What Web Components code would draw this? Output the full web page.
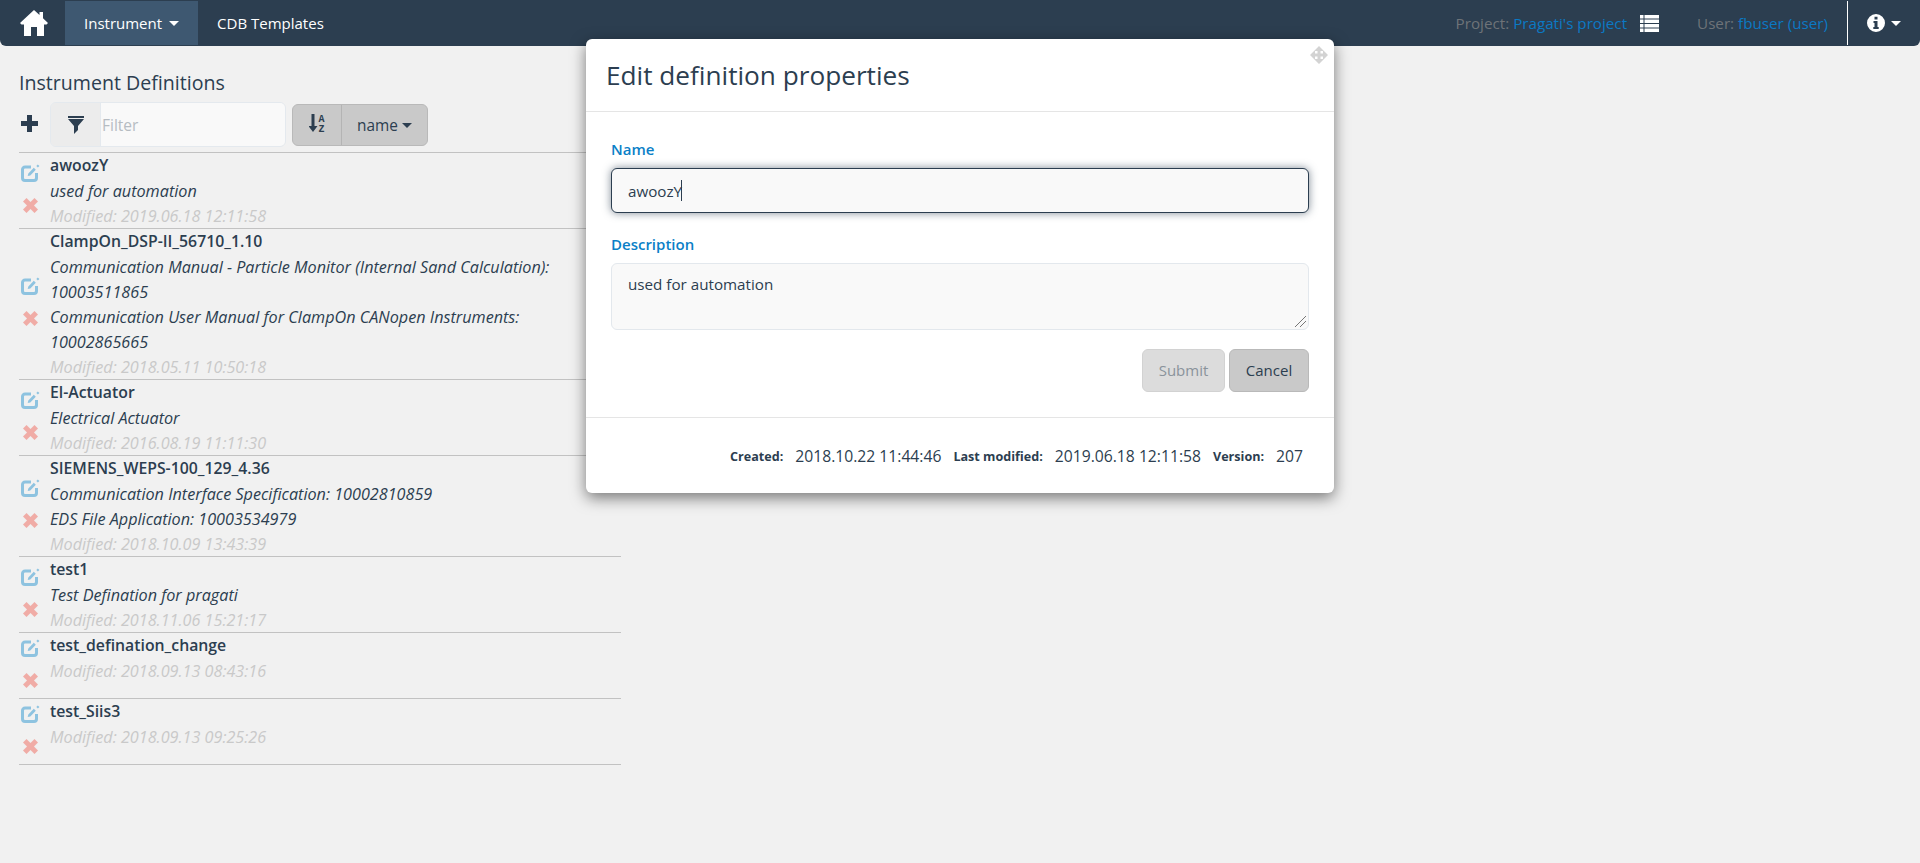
<!DOCTYPE html>
<html>
<head>
<meta charset="utf-8">
<title>Instrument Definitions</title>
<style>
    html, body{
        margin: 0;
        height: 100%;
        background: #f1f1f1;
        font-family: "Open Sans", "Liberation Sans", sans-serif;
        font-size: 15px;
        color: #2c3e50;
    }
</style>
</head>
<body>
<app-shell>
    <app-navbar slot="nav"></app-navbar>
    <definition-list slot="list" title-text="Instrument Definitions">
        <definition-row name="awoozY" modified="2019.06.18 12:11:58">
            <div>used for automation</div>
        </definition-row>
        <definition-row name="ClampOn_DSP-II_56710_1.10" modified="2018.05.11 10:50:18">
            <div>Communication Manual - Particle Monitor (Internal Sand Calculation): 10003511865</div>
            <div>Communication User Manual for ClampOn CANopen Instruments: 10002865665</div>
        </definition-row>
        <definition-row name="El-Actuator" modified="2016.08.19 11:11:30">
            <div>Electrical Actuator</div>
        </definition-row>
        <definition-row name="SIEMENS_WEPS-100_129_4.36" modified="2018.10.09 13:43:39">
            <div>Communication Interface Specification: 10002810859</div>
            <div>EDS File Application: 10003534979</div>
        </definition-row>
        <definition-row name="test1" modified="2018.11.06 15:21:17">
            <div>Test Defination for pragati</div>
        </definition-row>
        <definition-row name="test_defination_change" modified="2018.09.13 08:43:16"></definition-row>
        <definition-row name="test_Siis3" modified="2018.09.13 09:25:26"></definition-row>
    </definition-list>
    <edit-dialog slot="dialog"></edit-dialog>
</app-shell>

<script>
class AppShell extends HTMLElement{
    constructor(){
        super();
        this.attachShadow({mode: "open"}).innerHTML = `
        <style>
            :host{
                display: block;
                position: relative;
                min-height: 863px;
            }
            main{
                padding: 23px 0 0 19px;
                width: 602px;
            }
        </style>
        <slot name="nav"></slot>
        <main><slot name="list"></slot></main>
        <slot name="dialog"></slot>
        `;
    }
}

class AppNavbar extends HTMLElement{
    constructor(){
        super();
        this.attachShadow({mode: "open"}).innerHTML = `
        <style>
            :host{
                display: flex;
                align-items: stretch;
                height: 46px;
                box-sizing: border-box;
                padding: 1px 0;
                background: #2c3e50;
                border-radius: 0 0 6px 6px;
                color: #fff;
                font-size: 15px;
            }
            .home{
                display: flex;
                align-items: center;
                width: 65px;
                padding-left: 20px;
                box-sizing: border-box;
            }
            .tab{
                display: flex;
                align-items: center;
                padding: 0 19px;
            }
            .tab.active{
                background: #3e5871;
            }
            .caret{
                display: inline-block;
                margin-left: 7px;
                border-top: 5px solid currentColor;
                border-left: 5px solid transparent;
                border-right: 5px solid transparent;
            }
            .spacer{
                flex: 1;
            }
            .info{
                display: flex;
                align-items: center;
                color: #6e7378;
                font-size: 15.2px;
            }
            .info a{
                color: #0b79c4;
                margin-left: 4px;
            }
            .project{
                margin-right: 13px;
            }
            .user{
                margin-left: 38px;
                margin-right: 19px;
            }
            .help{
                display: flex;
                align-items: center;
                width: 73px;
                box-sizing: border-box;
                padding-left: 19px;
                border-left: 1px solid #fff;
            }
            .help .caret{
                margin-left: 6px;
            }
        </style>
        <div class="home">
            <svg width="28" height="26" viewBox="0 0 28 26"><path fill="#fff" d="M14 0 L19.5 5 V2 H23 V8.2 L28 13 L26.5 14.5 H24 V26 H17 V17 H11 V26 H4 V14.5 H1.5 L0 13 Z"/></svg>
        </div>
        <div class="tab active">Instrument<span class="caret"></span></div>
        <div class="tab">CDB Templates</div>
        <div class="spacer"></div>
        <div class="info">
            <span>Project:</span><a class="project">Pragati's project</a>
            <svg width="19" height="17" viewBox="0 0 19 17"><path fill="#fff" d="M0 0h3.500v3.500H0zM4.500 0H19v3.500H4.500zM0 4.500h3.500V8H0zM4.500 4.500H19V8H4.500zM0 9h3.500v3.500H0zM4.500 9H19v3.500H4.500zM0 13.500h3.500V17H0zM4.500 13.500H19V17H4.500z"/></svg>
            <span class="user">User:<a>fbuser (user)</a></span>
        </div>
        <div class="help">
            <svg width="18" height="18" viewBox="0 0 18 18"><path fill="#fff" fill-rule="evenodd" d="M9 0a9 9 0 1 0 0 18A9 9 0 0 0 9 0zM7.500 2.800h3v2.700h-3zM6.500 7h4v6h1.200v2H6.300v-2h1.200V9H6.500z"/></svg>
            <span class="caret"></span>
        </div>
        `;
    }
}

class DefinitionList extends HTMLElement{
    constructor(){
        super();
        this.attachShadow({mode: "open"}).innerHTML = `
        <style>
            :host{
                display: block;
            }
            h4{
                margin: 0 0 6px;
                font-size: 19.6px;
                font-weight: 400;
                line-height: 27px;
                color: #2c3e50;
            }
            .toolbar{
                display: flex;
                align-items: center;
                height: 45px;
                margin-bottom: 5px;
            }
            .add{
                width: 31px;
                height: 17px;
                flex: none;
                margin-top: -2px;
            }
            .group{
                display: flex;
                width: 236px;
                height: 45px;
                box-sizing: border-box;
                border: 1px solid #e4e9ee;
                border-radius: 6px;
                overflow: hidden;
            }
            .addon{
                display: flex;
                align-items: center;
                justify-content: center;
                width: 49px;
                background: #ececec;
                border-right: 1px solid #e4e9ee;
            }
            .filter{
                flex: 1;
                display: flex;
                align-items: center;
                padding-left: 1px;
                background: #f9f9f9;
                color: #b6bcc2;
                font-size: 15.5px;
            }
            .sort{
                display: flex;
                height: 42px;
                margin: 1px 0 0 6px;
                box-sizing: border-box;
                background: #c9c9c9;
                border: 1px solid #b9b9b9;
                border-radius: 6px;
                font-size: 15.4px;
            }
            .sort div{
                display: flex;
                align-items: center;
                justify-content: center;
            }
            .az{
                width: 48px;
                border-right: 1px solid #b4b4b4;
            }
            .az svg text{
                font: 700 10px "Liberation Mono", monospace;
                fill: #2c3e50;
            }
            .name{
                width: 85px;
                gap: 4px;
            }
            .caret{
                border-top: 5px solid #2c3e50;
                border-left: 5px solid transparent;
                border-right: 5px solid transparent;
            }
            .rows{
                border-top: 1px solid #c2c2c2;
            }
        </style>
        <h4></h4>
        <div class="toolbar">
            <svg class="add" viewBox="0 0 31 17"><path fill="#2c3e50" d="M6 0h5v6h6v5h-6v6H6v-6H0V6h6z" transform="translate(2 0)"/></svg>
            <div class="group">
                <div class="addon">
                    <svg width="16" height="18" viewBox="0 0 16 18"><path fill="#2c3e50" d="M0 0h16v2H0zM0 3h16L10 10v4l-4 4V10z"/></svg>
                </div>
                <div class="filter">Filter</div>
            </div>
            <div class="sort">
                <div class="az">
                    <svg width="16" height="28" viewBox="0 0 16 28">
                        <path fill="#2c3e50" d="M2.500 3h3v12H8.500l-4.500 6-4.500-6h3z"/>
                        <text x="9.500" y="11">A</text><text x="9.500" y="21">Z</text>
                    </svg>
                </div>
                <div class="name">name<span class="caret"></span></div>
            </div>
        </div>
        <div class="rows"><slot></slot></div>
        `;
    }

    connectedCallback(){
        this.shadowRoot.querySelector("h4").textContent = this.getAttribute("title-text");
    }
}

class DefinitionRow extends HTMLElement{
    constructor(){
        super();
        this.attachShadow({mode: "open"}).innerHTML = `
        <style>
            :host{
                display: flex;
                border-bottom: 1px solid #c2c2c2;
                line-height: 25px;
                font-size: 16.2px;
            }
            .actions{
                display: flex;
                flex-direction: column;
                justify-content: center;
                flex: none;
                width: 31px;
            }
            .actions span{
                display: flex;
                align-items: center;
                height: 32.5px;
                padding-left: 2px;
            }
            .actions svg{
                margin-top: -3px;
            }
            .body{
                flex: 1;
            }
            .name{
                font-weight: 600;
                font-size: 15.8px;
                color: #2c3e50;
            }
            .desc{
                font-style: italic;
                color: #2c3e50;
                position: relative;
                top: 0.5px;
            }
            .modified{
                font-style: italic;
                color: #c9c9c9;
                position: relative;
                top: 0.5px;
            }
        </style>
        <div class="actions">
            <span>
                <svg width="19" height="18" viewBox="0 0 19 18">
                    <path fill="none" stroke="#8ec3e0" stroke-width="3" stroke-linejoin="round" d="M10 3H4a2.500 2.500 0 0 0-2.500 2.500V14A2.500 2.500 0 0 0 4 16.500h9a2.500 2.500 0 0 0 2.500-2.500V9"/>
                    <path fill="#8ec3e0" d="M12.800 3.800l2 2-5.500 5.700-2.600.6.600-2.600zM16.800 0.500l1.600 1.600-1.500 1.500-1.600-1.600z"/>
                </svg>
            </span>
            <span>
                <svg width="15" height="15" viewBox="0 0 15 15" style="margin-left:2px"><path fill="#f0aca6" d="M3.500 0l4 4 4-4L15 3.500l-4 4 4 4-3.500 3.500-4-4-4 4L0 11.500l4-4-4-4z"/></svg>
            </span>
        </div>
        <div class="body">
            <div class="name"></div>
            <div class="desc"><slot></slot></div>
            <div class="modified"></div>
        </div>
        `;
    }

    connectedCallback(){
        this.shadowRoot.querySelector(".name").textContent = this.getAttribute("name");
        this.shadowRoot.querySelector(".modified").textContent = "Modified: " + this.getAttribute("modified");
    }
}

class EditDialog extends HTMLElement{
    constructor(){
        super();
        this.attachShadow({mode: "open"}).innerHTML = `
        <style>
            :host{
                display: block;
                position: absolute;
                left: 586px;
                top: 39px;
                width: 748px;
                height: 454px;
                box-sizing: border-box;
                background: #fff;
                border-radius: 6px;
                box-shadow: 0 5px 15px rgba(0,0,0,.5);
                color: #2c3e50;
            }
            .move{
                position: absolute;
                top: 7px;
                right: 6px;
            }
            header{
                height: 73px;
                box-sizing: border-box;
                padding: 18px 20px 0;
                border-bottom: 1px solid #e5e5e5;
            }
            h3{
                margin: 0;
                font-size: 26.2px;
                font-weight: 400;
                line-height: 36px;
            }
            .form{
                height: 306px;
                box-sizing: border-box;
                padding: 25px 25px 0;
                border-bottom: 1px solid #e5e5e5;
            }
            label{
                display: block;
                height: 23px;
                line-height: 24px;
                color: #0b7fc7;
                font-weight: 600;
                margin-bottom: 8px;
            }
            .field{
                box-sizing: border-box;
                width: 698px;
                padding: 0 16px;
                background: #f9f9f9;
                border: 1px solid #e3e8ed;
                border-radius: 6px;
                position: relative;
                font-size: 15.2px;
            }
            .name-field{
                display: flex;
                align-items: center;
                height: 45px;
                margin-bottom: 19px;
                border-color: #2c3e50;
                box-shadow: 0 0 8px rgba(44,62,80,.6);
            }
            .cursor{
                width: 1px;
                height: 21px;
                background: #2c3e50;
                margin-left: -1px;
            }
            .desc-field{
                height: 67px;
                line-height: 20px;
                padding-top: 10px;
                margin-bottom: 19px;
            }
            .grip{
                position: absolute;
                right: 1px;
                bottom: 1px;
            }
            .buttons{
                display: flex;
                justify-content: flex-end;
                gap: 4px;
            }
            .btn{
                display: flex;
                align-items: center;
                justify-content: center;
                box-sizing: border-box;
                height: 43px;
                padding-bottom: 1px;
                border-radius: 6px;
                border: 1px solid #b9b9b9;
                background: #c9c9c9;
                color: #2c3e50;
            }
            .submit{
                width: 83px;
                background: #dcdcdc;
                border-color: #d2d2d2;
                color: #8a939b;
            }
            .cancel{
                width: 80px;
            }
            footer{
                display: flex;
                justify-content: flex-end;
                align-items: center;
                height: 75px;
                padding-right: 31px;
                padding-top: 1px;
                box-sizing: border-box;
                font-size: 15.7px;
            }
            b{
                font-size: 12.6px;
                font-weight: 700;
                margin-right: 12px;
            }
            footer span{
                margin-right: 12px;
            }
            footer span:last-child{
                margin-right: 0;
            }
        </style>
        <svg class="move" width="18" height="18" viewBox="0 0 18 18"><path fill="#d3d3d3" fill-rule="evenodd" d="M9 0l9 9-9 9-9-9zM5 5h2.500v2.500H5zM10.500 5H13v2.500h-2.500zM5 10.500h2.500V13H5zM10.500 10.500H13V13h-2.500z"/></svg>
        <header><h3>Edit definition properties</h3></header>
        <div class="form">
            <label>Name</label>
            <div class="field name-field">awoozY<span class="cursor"></span></div>
            <label>Description</label>
            <div class="field desc-field">used for automation
                <svg class="grip" width="13" height="13" viewBox="0 0 13 13"><path stroke="#777" fill="none" d="M1 12L12 1M6 12l6-6"/></svg>
            </div>
            <div class="buttons">
                <div class="btn submit">Submit</div>
                <div class="btn cancel">Cancel</div>
            </div>
        </div>
        <footer>
            <b>Created:</b><span>2018.10.22 11:44:46</span>
            <b>Last modified:</b><span>2019.06.18 12:11:58</span>
            <b>Version:</b><span>207</span>
        </footer>
        `;
    }
}

customElements.define("app-shell", AppShell);
customElements.define("app-navbar", AppNavbar);
customElements.define("definition-list", DefinitionList);
customElements.define("definition-row", DefinitionRow);
customElements.define("edit-dialog", EditDialog);
</script>
</body>
</html>
